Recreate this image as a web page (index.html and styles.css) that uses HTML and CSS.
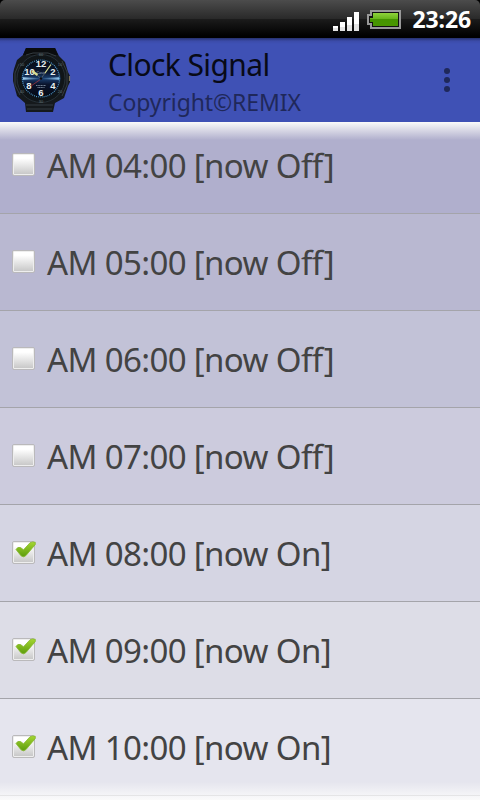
FILE: index.html
```
<!DOCTYPE html>
<html lang="en">
<head>
  <meta charset="UTF-8" />
  <title>Clock Signal</title>
  <link rel="stylesheet" href="styles.css">
</head>
<body>
  <div class="status-bar">
    <svg class="signal" width="26" height="20" viewBox="0 0 26 20">
      <path fill="#fff" d="M0 14h5v5H0zM7 10h5v9H7zM14 5h5v14h-5zM21 0h5v19h-5z" />
      <path fill="#c8c8c8" d="M0 16h5v3H0zM7 15h5v4H7zM14 13h5v6h-5zM21 12h5v7h-5z" opacity=".5" />
    </svg>
    <svg class="battery" width="34" height="20" viewBox="0 0 34 20">
      <defs>
        <linearGradient id="charge" x1="0" y1="0" x2="0" y2="1">
          <stop offset="0" stop-color="#8fd33c" />
          <stop offset=".45" stop-color="#68b51c" />
          <stop offset=".46" stop-color="#459400" />
          <stop offset="1" stop-color="#489600" />
        </linearGradient>
      </defs>
      <path fill="#111" stroke="#999" stroke-width="2" d="M4 1h29v17H4v-4H1V5h3z" />
      <path fill="url(#charge)" d="M6 3h25v13H6v-4H3V8h3z" />
    </svg>
    <span class="time">23:26</span>
  </div>

  <div class="header">
    <svg class="watch" width="60" height="64" viewBox="0 0 60 64">
      <defs>
        <linearGradient id="shine" x1="0" y1="0" x2="0" y2="1">
          <stop offset="0" stop-color="#060a14" />
          <stop offset=".35" stop-color="#0b1830" />
          <stop offset=".5" stop-color="#1a3f70" />
          <stop offset=".65" stop-color="#0a142c" />
          <stop offset="1" stop-color="#04070f" />
        </linearGradient>
        <linearGradient id="beam">
          <stop offset="0" stop-color="#a5d4f5" />
          <stop offset=".5" stop-color="#123564" />
          <stop offset="1" stop-color="#8fc6ee" />
        </linearGradient>
      </defs>
      <path fill="#15191c" d="M14 0h29l4 8 6 6 3 10 2 4v6l-2 4-4 12-9 5-2 9H14l-1-9-8-7-3-11-1-4V26l1-5 3-9 6-5z" />
      <path fill="#0a0c0e" d="M14 0h29l3 7H11z" />
      <path fill="none" stroke="#343d42" d="M14 57h27M15 61h25M7 16l-4 9v12l5 10M50 13l5 11v13l-5 11M14 7l7-2h15l8 3" />
      <circle cx="29" cy="30.500" r="24" fill="#101518" stroke="#263037" />
      <circle cx="29" cy="30.500" r="19.500" fill="url(#shine)" />
      <circle cx="29" cy="30.500" r="18.500" fill="none" stroke="#4f95bd" stroke-width="1.200" stroke-dasharray="1 .94" />
      <path fill="url(#beam)" d="M11 29.300l18 1 18-1v2.400l-18-.600-18 .600z" />
      <g class="bezel">
        <text x="10" y="18">50</text>
        <text x="48" y="18">10</text>
        <text x="10" y="45">40</text>
        <text x="48" y="45">20</text>
        <text x="29" y="8">60</text>
        <text x="29" y="55">30</text>
      </g>
      <g class="dial">
        <text x="29" y="18.800">12</text>
        <text x="41" y="26.800">2</text>
        <text x="41" y="40.500">4</text>
        <text x="29" y="48">6</text>
        <text x="17" y="40.500">8</text>
        <text x="17.500" y="26.800">10</text>
      </g>
      <text class="brand" x="29" y="25.500">Casio</text>
      <path stroke="#9fb2c4" stroke-width=".7" stroke-dasharray="1.200 .4" d="M24 37.500h10M25.500 39.500h7" />
      <path stroke="#d7dd91" stroke-width="2.200" d="M20 23l5.500 4" />
      <path stroke="#d7dd91" stroke-width="1.300" d="M33 25l6-8.500" />
      <path stroke="#626d70" stroke-width=".8" d="M29 30.500l4-5.500M29 30.500l-4-3.500" />
      <path stroke="#b33a40" stroke-width=".7" d="M29 31l-10 7" />
      <circle cx="29" cy="30.500" r="1.200" fill="#080a0d" />
      <path stroke="#77705c" stroke-width="1.200" d="M57.500 28v5" />
    </svg>
    <div class="titles">
      <div class="title">Clock Signal</div>
      <div class="subtitle">Copyright©REMIX</div>
    </div>
    <svg class="menu" width="6" height="24" viewBox="0 0 6 24">
      <circle cx="3" cy="3" r="3" />
      <circle cx="3" cy="12" r="3" />
      <circle cx="3" cy="21" r="3" />
    </svg>
  </div>

  <div class="list">
    <ul id="alarms"></ul>
  </div>

  <script>
    const alarms = [
      ['04:00', false],
      ['05:00', false],
      ['06:00', false],
      ['07:00', false],
      ['08:00', true],
      ['09:00', true],
      ['10:00', true],
    ];
    const tick = `<svg class="tick" width="22" height="18" viewBox="0 0 22 18">
      <defs><linearGradient id="leaf" x1="0" y1="0" x2="0" y2="1">
        <stop offset="0" stop-color="#a5d632" /><stop offset="1" stop-color="#5c9c0c" />
      </linearGradient></defs>
      <path fill="url(#leaf)" stroke="#85b82d" stroke-width=".8" d="M1 8.500Q2.500 5.500 5.500 6.500L8.500 8.800 15 1.800Q17.500.300 20.300 1.300L20.300 3.500 11 14.500Q8.500 17 6 14.800Z" />
    </svg>`;

    const list = document.getElementById('alarms');
    for (const [time, on] of alarms) {
      list.innerHTML += `<li>
        <span class="check">${on ? tick : ''}</span>
        <span class="label">AM ${time} [now ${on ? 'On' : 'Off'}]</span>
      </li>`;
    }
  </script>
</body>
</html>
```
FILE: styles.css
```
body {
  margin: 0;
  height: 800px;
  display: flex;
  flex-direction: column;
  overflow: hidden;
  background: #000;
  font-family: "Noto Sans", "Open Sans", sans-serif;
}

.status-bar {
  height: 38px;
  flex: none;
  box-sizing: border-box;
  display: flex;
  align-items: center;
  justify-content: flex-end;
  padding-right: 9px;
  border-radius: 5px 5px 0 0;
  background: linear-gradient(#4c4c4c 0, #292929 50%, #1b1b1b 51%, #000 95%);
}

.signal {
  margin: 5px 8px 0 0;
}

.battery {
  margin: 2px 11px 0 0;
}

.time {
  color: #fff;
  font-size: 23px;
  font-weight: bold;
  line-height: 38px;
  letter-spacing: -0.1px;
}

.header {
  height: 84px;
  flex: none;
  box-sizing: border-box;
  display: flex;
  align-items: center;
  padding: 0 30px 0 12px;
  background: linear-gradient(#25306c 0, #3b4ba9 3px, #3f51b5 6px);
}

.watch {
  flex: none;
}

.watch text {
  text-anchor: middle;
  font-family: "Liberation Sans", sans-serif;
}

.dial {
  fill: #e6eff0;
  font-size: 9.5px;
  font-weight: bold;
}

.bezel {
  fill: #68777e;
  font-size: 4px;
}

.watch .brand {
  fill: #a9bdcf;
  font-size: 3.5px;
  font-style: italic;
}

.titles {
  flex: 1;
  margin-left: 36px;
  padding-top: 4px;
  white-space: nowrap;
}

.title {
  font-size: 30px;
  line-height: 40px;
  letter-spacing: -0.6px;
  color: #080a17;
}

.subtitle {
  font-size: 23px;
  line-height: 34px;
  letter-spacing: -0.1px;
  color: #1f285a;
}

.menu {
  fill: #1f285a;
}

.list {
  position: relative;
  flex: 1;
  overflow: hidden;
  background: #e8e8f2;
}

/* fading edges of the scroll area */
.list::before,
.list::after {
  content: "";
  position: absolute;
  left: 0;
  right: 0;
  height: 18px;
  top: 0;
  background: linear-gradient(#fafafa, rgba(250, 250, 250, 0));
}

.list::after {
  top: auto;
  bottom: 0;
  background: linear-gradient(rgba(250, 250, 250, 0), #fafafa);
}

ul {
  list-style: none;
  margin: -5px 0 0;
  padding: 0;
}

li {
  height: 96px;
  display: flex;
  align-items: center;
  padding-left: 12px;
  border-bottom: 1px solid #a4a4aa;
}

li:nth-child(1) { background: #b0afcd; }
li:nth-child(2) { background: #b9b8d1; }
li:nth-child(3) { background: #c2c2d7; }
li:nth-child(4) { background: #cccbdd; }
li:nth-child(5) { background: #d5d5e3; }
li:nth-child(6) { background: #dddde7; }
li:nth-child(7) { background: #e5e5ee; }

.check {
  position: relative;
  width: 23px;
  height: 23px;
  margin-bottom: 2px;
  box-sizing: border-box;
  border: 1px solid #bab9bb;
  border-radius: 2px;
  box-shadow: inset 0 0 0 1px #eee;
  background: linear-gradient(#fff 20%, #c5c5c5);
}

.tick {
  position: absolute;
  left: 2px;
  top: -1px;
}

.label {
  margin-left: 12px;
  padding-top: 2px;
  font-size: 33px;
  line-height: 40px;
  letter-spacing: -0.63px;
  white-space: nowrap;
  color: #434343;
}
```
